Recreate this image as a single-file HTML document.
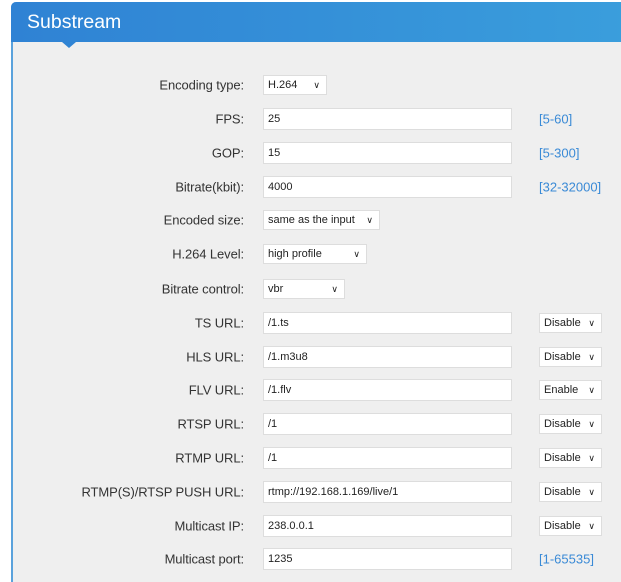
<!DOCTYPE html>
<html><head><meta charset="utf-8"><style>
body{margin:0;width:621px;height:571px;background:#fff;overflow:hidden;font-family:"Liberation Sans","DejaVu Sans",sans-serif;position:relative}
.panel{position:absolute;left:11px;top:2px;width:620px;height:580px;background:#efefef;border-left:2px solid #5aa2dc;border-top-left-radius:5px}
.hdr{position:absolute;left:11px;top:2px;width:620px;height:40px;background:linear-gradient(90deg,#2f82d4,#3a9edc);border-top-left-radius:5px}
.hdr span{position:absolute;left:16px;top:9px;color:#fff;font-size:19.5px}
.tri{position:absolute;left:62px;top:42px;width:0;height:0;border-left:7px solid transparent;border-right:7px solid transparent;border-top:6px solid #2f84d4}
.lab{position:absolute;right:377px;font-size:13px;color:#333;transform:translateY(-50%);white-space:nowrap;letter-spacing:-0.1px}
.inp{position:absolute;left:263px;width:249px;height:22px;background:#fff;border:1px solid #ddd;box-sizing:border-box;font-size:11px;color:#222;line-height:20px;padding-left:4px;transform:translateY(-50%)}
.sel{position:absolute;height:20px;background:#fff;border:1px solid #ddd;box-sizing:border-box;font-size:11px;color:#222;line-height:19px;padding-left:4px;transform:translateY(-50%)}
.sel i{position:absolute;right:6px;top:0;font-style:normal;font-size:9px}
.rng{position:absolute;left:539px;font-size:13px;color:#3a8ad6;transform:translateY(-50%)}
</style></head><body>
<div class="panel"></div>
<div class="hdr"><span>Substream</span></div>
<div class="tri"></div>

<div class="lab" style="top:85px">Encoding type:</div>
<div class="sel" style="top:85px;left:263px;width:64px">H.264<i>&#8744;</i></div>

<div class="lab" style="top:119px">FPS:</div>
<div class="inp" style="top:119px">25</div><div class="rng" style="top:119px">[5-60]</div>

<div class="lab" style="top:153px">GOP:</div>
<div class="inp" style="top:153px">15</div><div class="rng" style="top:153px">[5-300]</div>

<div class="lab" style="top:187px">Bitrate(kbit):</div>
<div class="inp" style="top:187px">4000</div><div class="rng" style="top:187px">[32-32000]</div>

<div class="lab" style="top:220px">Encoded size:</div>
<div class="sel" style="top:220px;left:263px;width:117px">same as the input<i>&#8744;</i></div>

<div class="lab" style="top:254px">H.264 Level:</div>
<div class="sel" style="top:254px;left:263px;width:104px">high profile<i>&#8744;</i></div>

<div class="lab" style="top:289px">Bitrate control:</div>
<div class="sel" style="top:289px;left:263px;width:82px">vbr<i>&#8744;</i></div>

<div class="lab" style="top:323px">TS URL:</div>
<div class="inp" style="top:323px">/1.ts</div>
<div class="sel" style="top:323px;left:539px;width:63px">Disable<i>&#8744;</i></div>

<div class="lab" style="top:357px">HLS URL:</div>
<div class="inp" style="top:357px">/1.m3u8</div>
<div class="sel" style="top:357px;left:539px;width:63px">Disable<i>&#8744;</i></div>

<div class="lab" style="top:390px">FLV URL:</div>
<div class="inp" style="top:390px">/1.flv</div>
<div class="sel" style="top:390px;left:539px;width:63px">Enable<i>&#8744;</i></div>

<div class="lab" style="top:424px">RTSP URL:</div>
<div class="inp" style="top:424px">/1</div>
<div class="sel" style="top:424px;left:539px;width:63px">Disable<i>&#8744;</i></div>

<div class="lab" style="top:458px">RTMP URL:</div>
<div class="inp" style="top:458px">/1</div>
<div class="sel" style="top:458px;left:539px;width:63px">Disable<i>&#8744;</i></div>

<div class="lab" style="top:492px">RTMP(S)/RTSP PUSH URL:</div>
<div class="inp" style="top:492px">rtmp://192.168.1.169/live/1</div>
<div class="sel" style="top:492px;left:539px;width:63px">Disable<i>&#8744;</i></div>

<div class="lab" style="top:526px">Multicast IP:</div>
<div class="inp" style="top:526px">238.0.0.1</div>
<div class="sel" style="top:526px;left:539px;width:63px">Disable<i>&#8744;</i></div>

<div class="lab" style="top:559px">Multicast port:</div>
<div class="inp" style="top:559px">1235</div><div class="rng" style="top:559px">[1-65535]</div>
</body></html>
